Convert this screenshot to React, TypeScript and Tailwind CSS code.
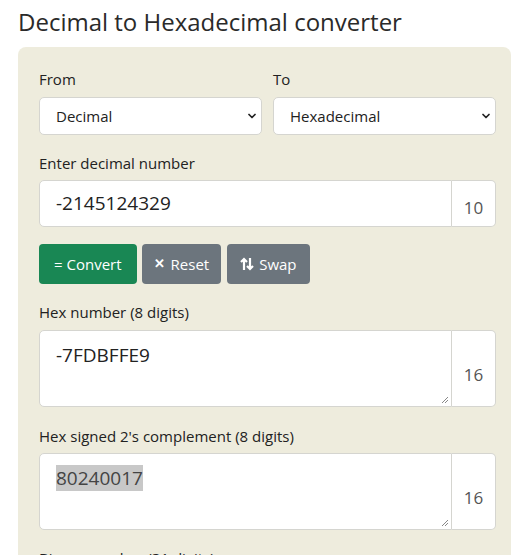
import { ChevronDown } from 'lucide-react'

const font = { fontFamily: '"Open Sans", "Noto Sans", sans-serif' }

function Select({ value }: { value: string }) {
  return (
    <div className="flex h-[38px] items-center justify-between rounded-[5px] border border-[#d5d5d0] bg-white pl-4 pr-[3px] text-[15px] text-[#222]">
      <span>{value}</span>
      <ChevronDown size={12} strokeWidth={3.5} className="text-[#222]" />
    </div>
  )
}

function Grip() {
  return (
    <svg className="absolute bottom-[2px] right-[2px]" width="8" height="8" viewBox="0 0 8 8">
      <path d="M7 1 L1 7 M7 4 L4 7" stroke="#888" strokeWidth="1" />
    </svg>
  )
}

function Output({ value, selected }: { value: string; selected?: boolean }) {
  return (
    <div className="flex h-[77px]">
      <div className="relative flex-1 rounded-l-[5px] border border-[#d5d5d0] bg-white px-4 pt-[10px] text-[19px] text-[#222]">
        <span className={selected ? 'bg-[#c8c8c8] text-[#444]' : ''}>{value}</span>
        <Grip />
      </div>
      <div className="flex w-[44px] items-end justify-center rounded-r-[5px] border border-l-0 border-[#d5d5d0] bg-white pb-[19px] text-[17px] text-[#555]">16</div>
    </div>
  )
}

export default function App() {
  return (
    <div className="min-h-screen bg-white px-[18px] text-[#222]" style={font}>
      <h1 className="pt-[5px] text-[24px] leading-[34px] text-[#2a2a2a]">Decimal to Hexadecimal converter</h1>
      <div className="mt-[8px] rounded-[8px] bg-[#eeecdd] pb-8 pl-[21px] pr-[15px] pt-[20px]">
        <div className="grid grid-cols-2 gap-[11px]">
          <div>
            <div className="mb-[6px] text-[15px] leading-6">From</div>
            <Select value="Decimal" />
          </div>
          <div>
            <div className="mb-[6px] text-[15px] leading-6">To</div>
            <Select value="Hexadecimal" />
          </div>
        </div>
        <div className="mb-[5px] mt-[16px] text-[15px] leading-6">Enter decimal number</div>
        <div className="flex h-[47px]">
          <div className="flex flex-1 items-center rounded-l-[5px] border border-[#d5d5d0] bg-white px-4 text-[19px] text-[#222]">-2145124329</div>
          <div className="flex w-[44px] items-end justify-center rounded-r-[5px] border border-l-0 border-[#d5d5d0] bg-white pb-[6px] text-[17px] text-[#555]">10</div>
        </div>
        <div className="mt-[17px] flex text-[15px] text-white">
          <button className="h-10 rounded-[4px] bg-[#198754] px-[15px]">= Convert</button>
          <button className="ml-[5px] flex h-10 items-center gap-[6px] rounded-[4px] bg-[#6c757d] px-[12px]">
            <span className="text-[13px] font-bold">✕</span>Reset
          </button>
          <button className="ml-[6px] flex h-10 items-center gap-[5px] rounded-[4px] bg-[#6c757d] px-[13px]">
            <svg width="14" height="14" viewBox="0 0 14 14" fill="none" stroke="white" strokeWidth="2.2">
              <path d="M4 13V2M1 5l3-3 3 3M10 1v11M7 9l3 3 3-3" />
            </svg>
            Swap
          </button>
        </div>
        <div className="mb-[6px] mt-[16px] text-[15px] leading-6">Hex number (8 digits)</div>
        <Output value="-7FDBFFE9" />
        <div className="mb-[5px] mt-[17px] text-[15px] leading-6">Hex signed 2's complement (8 digits)</div>
        <Output value="80240017" selected />
        <div className="mb-[6px] mt-[16px] text-[15px] leading-6">Binary number (31 digits)</div>
        <Output value="" />
      </div>
    </div>
  )
}
